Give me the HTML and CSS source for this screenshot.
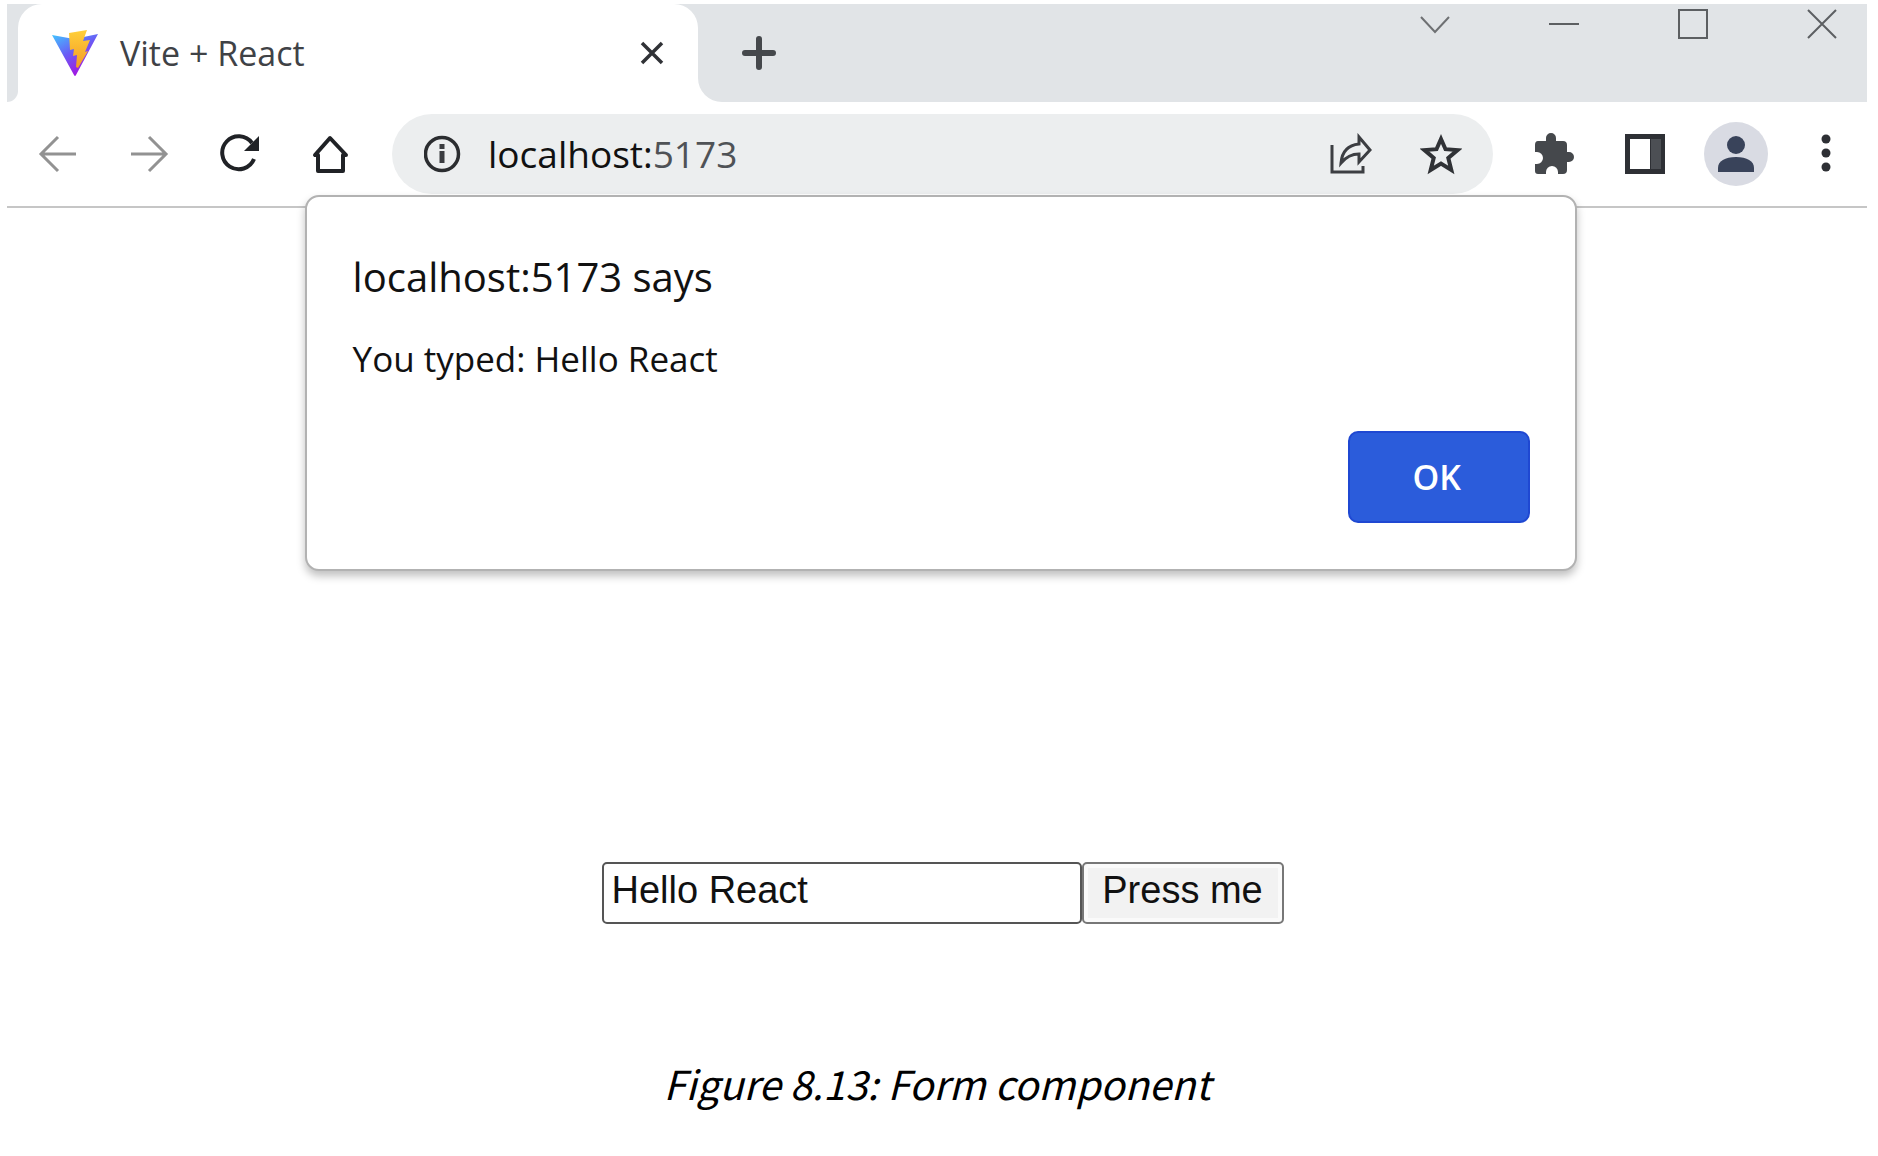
FILE: index.html
```
<!DOCTYPE html>
<html lang="en">
<head>
<meta charset="utf-8">
<title>Form component</title>
<link rel="stylesheet" href="styles.css">
</head>
<body>
<figure class="figure">
  <div class="browser">
    <header class="tabstrip">
      <div class="strip-edge"></div>
      <div class="tab-slot">
        <div class="tab">
          <svg class="favicon" viewBox="0 0 46 46" aria-hidden="true">
            <defs>
              <linearGradient id="vite" x1="0" y1="0" x2="0.6" y2="1"><stop offset="0" stop-color="#41c7ff"/><stop offset="0.5" stop-color="#6a5cf5"/><stop offset="1" stop-color="#a80fe0"/></linearGradient>
              <linearGradient id="bolt" x1="0" y1="0" x2="0" y2="1"><stop offset="0" stop-color="#ffd03a"/><stop offset="1" stop-color="#f39a26"/></linearGradient>
            </defs>
            <path fill="url(#vite)" d="M0 5l22 4L46 4 24 45q-1 2-2 0z"/>
            <path fill="url(#bolt)" d="M17 3L35 0l-4 11 7-1-5 12 3-1-10 17-2-1 1-12-4 1 1-7-4 1z"/>
          </svg>
          <span class="tab-title">Vite + React</span>
          <button class="icon-btn tab-close" aria-label="Close tab"><svg width="24" height="24" viewBox="0 0 24 24"><path d="M2 2l20 20M22 2L2 22" fill="none" stroke="#303236" stroke-width="3.500"/></svg></button>
        </div>
      </div>
      <div class="strip-rest">
        <button class="icon-btn" aria-label="New tab"><svg width="34" height="34" viewBox="0 0 34 34"><path d="M17 3v28M3 17h28" fill="none" stroke="#45484c" stroke-width="6" stroke-linecap="round"/></svg></button>
        <div class="window-controls">
          <button class="icon-btn" aria-label="Search tabs"><svg width="30" height="30" viewBox="0 0 30 30"><path d="M1 8l14 15L29 8" fill="none" stroke="#6e7073" stroke-width="2"/></svg></button>
          <button class="icon-btn" aria-label="Minimize"><svg width="30" height="30" viewBox="0 0 30 30"><path d="M0 15h30" fill="none" stroke="#5c5f62" stroke-width="2"/></svg></button>
          <button class="icon-btn" aria-label="Maximize"><svg width="30" height="30" viewBox="0 0 30 30"><path d="M1 1h28v28H1z" fill="none" stroke="#5c5f62" stroke-width="2"/></svg></button>
          <button class="icon-btn" aria-label="Close"><svg width="30" height="30" viewBox="0 0 30 30"><path d="M1 1l28 28M29 1L1 29" fill="none" stroke="#5c5f62" stroke-width="2"/></svg></button>
        </div>
      </div>
    </header>

    <nav class="toolbar">
      <div class="tool-group">
        <button class="icon-btn" aria-label="Back"><svg width="40" height="40" viewBox="0 0 40 40"><path d="M20 3L3 20l17 17M3 20h35" fill="none" stroke="#929292" stroke-width="3"/></svg></button>
        <button class="icon-btn" aria-label="Forward"><svg width="40" height="40" viewBox="0 0 40 40"><path d="M20 3l17 17-17 17M37 20H2" fill="none" stroke="#929292" stroke-width="3"/></svg></button>
        <button class="icon-btn" aria-label="Reload"><svg width="40" height="40" viewBox="0 0 40 40"><path d="M34 25A16.500 16.500 0 1 1 32 9" fill="none" stroke="#202226" stroke-width="4"/><path d="M39 2v15H24z" fill="#202226"/></svg></button>
        <button class="icon-btn" aria-label="Home"><svg width="40" height="40" viewBox="0 0 40 40"><path d="M19 4L4 21h3v16h25V21h3z" fill="none" stroke="#202226" stroke-width="4" stroke-linejoin="round"/></svg></button>
      </div>
      <div class="address">
        <svg width="38" height="38" viewBox="0 0 38 38" aria-hidden="true"><circle cx="18" cy="19" r="16.500" fill="none" stroke="#2b2d30" stroke-width="3.500"/><path d="M18 16v12M18 9v5" stroke="#3a3c40" stroke-width="5"/></svg>
        <span class="url">localhost:<span class="port">5173</span></span>
        <button class="icon-btn" aria-label="Share"><svg width="42" height="42" viewBox="0 0 42 42"><path d="M2 12v27h31v-6" fill="none" stroke="#3c3e42" stroke-width="3"/><path d="M11 30C12 18 19 12 29 11V4l11 13-11 12v-8C21 21 16 24 11 30z" fill="none" stroke="#3c3e42" stroke-width="3"/></svg></button>
        <button class="icon-btn" aria-label="Bookmark"><svg width="42" height="42" viewBox="0 0 42 42"><path d="M21 6l4.500 10.200 12 .9-9.200 7.800 3 12.100L21 30.500 10.700 37l3-12.100-9.200-7.800 12-.9z" fill="none" stroke="#303236" stroke-width="4"/></svg></button>
      </div>
      <div class="tool-group">
        <button class="icon-btn" aria-label="Extensions"><svg width="40" height="42" viewBox="0 0 40 42"><path fill="#45484c" d="M4 8h8V5a5 5 0 0 1 10 0v3h7q4 0 4 4v7h2a5 5 0 0 1 0 10h-2v8q0 4-4 4h-5v-2a6 6 0 0 0-12 0v2H4q-3 0-3-3v-7h2a6 6 0 0 0 0-12H1v-7q0-4 3-4z"/></svg></button>
        <button class="icon-btn" aria-label="Side panel"><svg width="40" height="40" viewBox="0 0 40 40"><path fill="#2e3035" fill-rule="evenodd" d="M0 0h40v40H0zM5 5v30h20V5z"/><path d="M26 5h10v30H26z" fill="#4c4f54"/></svg></button>
        <button class="icon-btn avatar" aria-label="Profile"><svg width="36" height="36" viewBox="0 0 36 36"><circle cx="18" cy="9" r="9" fill="#39435a"/><path d="M0 36v-4c0-7 7-11 18-11s18 4 18 11v4z" fill="#39435a"/></svg></button>
        <button class="icon-btn" aria-label="Menu"><svg width="40" height="40" viewBox="0 0 40 40" fill="#2e3035"><circle cx="19" cy="5" r="4.500"/><circle cx="19" cy="19" r="4.500"/><circle cx="19" cy="33" r="4.500"/></svg></button>
      </div>
    </nav>

    <main class="viewport">
      <div class="dialog" role="alertdialog" aria-labelledby="dialog-title" aria-describedby="dialog-message">
        <h1 class="dialog-title" id="dialog-title">localhost:5173 says</h1>
        <p class="dialog-message" id="dialog-message">You typed: Hello React</p>
        <button class="ok">OK</button>
      </div>
      <form class="form">
        <input class="field" type="text" value="Hello React" aria-label="Text">
        <button class="press" type="button">Press me</button>
      </form>
    </main>
  </div>
  <figcaption class="caption">Figure 8.13: Form component</figcaption>
</figure>
</body>
</html>
```
FILE: styles.css
```
* { box-sizing: border-box; }

body {
  margin: 0;
  background: #fff;
  color: #111;
  font-family: "Open Sans", "Noto Sans", sans-serif;
}

.figure { margin: 0; padding: 4px 11px 0 7px; }

.icon-btn {
  display: flex;
  flex: none;
  align-items: center;
  justify-content: center;
  padding: 0;
  border: 0;
  background: none;
}

svg { display: block; flex: none; }

/* Tab strip */
.tabstrip { display: flex; height: 98px; }
.strip-edge { width: 11px; background: #e1e4e7; border-radius: 0 0 12px 0; }
.tab-slot {
  flex: 0 1 680px;
  background: linear-gradient(#e1e4e7 40px, #fff 40px);
}
.tab {
  display: flex;
  align-items: center;
  height: 100%;
  padding: 0 34px;
  background: #fff;
  border-radius: 24px 24px 0 0;
}
.favicon { width: 46px; height: 46px; }
.tab-title { flex: 1; margin-left: 22px; font-size: 34px; line-height: 48px; color: #3f4246; }
.strip-rest {
  display: flex;
  flex: 1;
  align-items: center;
  justify-content: space-between;
  padding: 0 30px 0 44px;
  background: #e1e4e7;
  border-radius: 0 0 0 24px;
}
.window-controls { display: flex; align-self: flex-start; gap: 99px; padding-top: 5px; }

/* Toolbar */
.toolbar {
  display: flex;
  align-items: center;
  gap: 41px;
  height: 106px;
  padding: 0 20px 0 31px;
  border-bottom: 2px solid #c6c6c6;
}
.tool-group { display: flex; align-items: center; gap: 51px; }
.address {
  display: flex;
  flex: 1;
  align-items: center;
  gap: 48px;
  height: 80px;
  padding: 0 31px 0 32px;
  border-radius: 40px;
  background: #eceeef;
}
.url { flex: 1; margin-left: -22px; font-size: 37px; line-height: 56px; }
.port { color: #4f5256; }
.avatar {
  width: 64px;
  height: 64px;
  margin: 0 -12px;
  border-radius: 50%;
  background: #d9dbe3;
}

/* Page area and alert */
.viewport { position: relative; padding: 654px 0 0 11px; }
.dialog {
  position: absolute;
  top: -13px;
  left: 16%;
  right: 15.6%;
  display: flex;
  flex-direction: column;
  padding: 52px 45px 46px 46px;
  border: 2px solid #b2b2b2;
  border-radius: 14px;
  background: #fff;
  box-shadow: 0 5px 8px rgba(0, 0, 0, 0.25);
}
.dialog-title { margin: 0; font-size: 40px; font-weight: 400; line-height: 56px; }
.dialog-message { margin: 30px 0 48px; font-size: 35px; line-height: 48px; }
.ok {
  align-self: flex-end;
  width: 182px;
  height: 92px;
  padding: 0 4px 0 0;
  border: 2px solid #1f48d2;
  border-radius: 10px;
  background: #2b5cdb;
  color: #fff;
  font: 600 34px "Open Sans", "Noto Sans", sans-serif;
}

/* Form */
.form { display: flex; justify-content: center; }
.field, .press {
  height: 62px;
  border: 2px solid #555;
  border-radius: 5px;
  color: #111;
  font: 38px "Liberation Sans", Arial, sans-serif;
}
.field { width: 480px; padding: 0 8px 5px; background: #fff; }
.press {
  width: 202px;
  padding: 0 0 5px;
  border-color: #777;
  background: #f2f2f2;
  box-shadow: inset 0 0 0 4px #fafafa;
}

.caption {
  padding-top: 128px;
  color: #000;
  font: italic 400 40px/62px "Noto Sans CJK SC", sans-serif;
  text-align: center;
}
```
